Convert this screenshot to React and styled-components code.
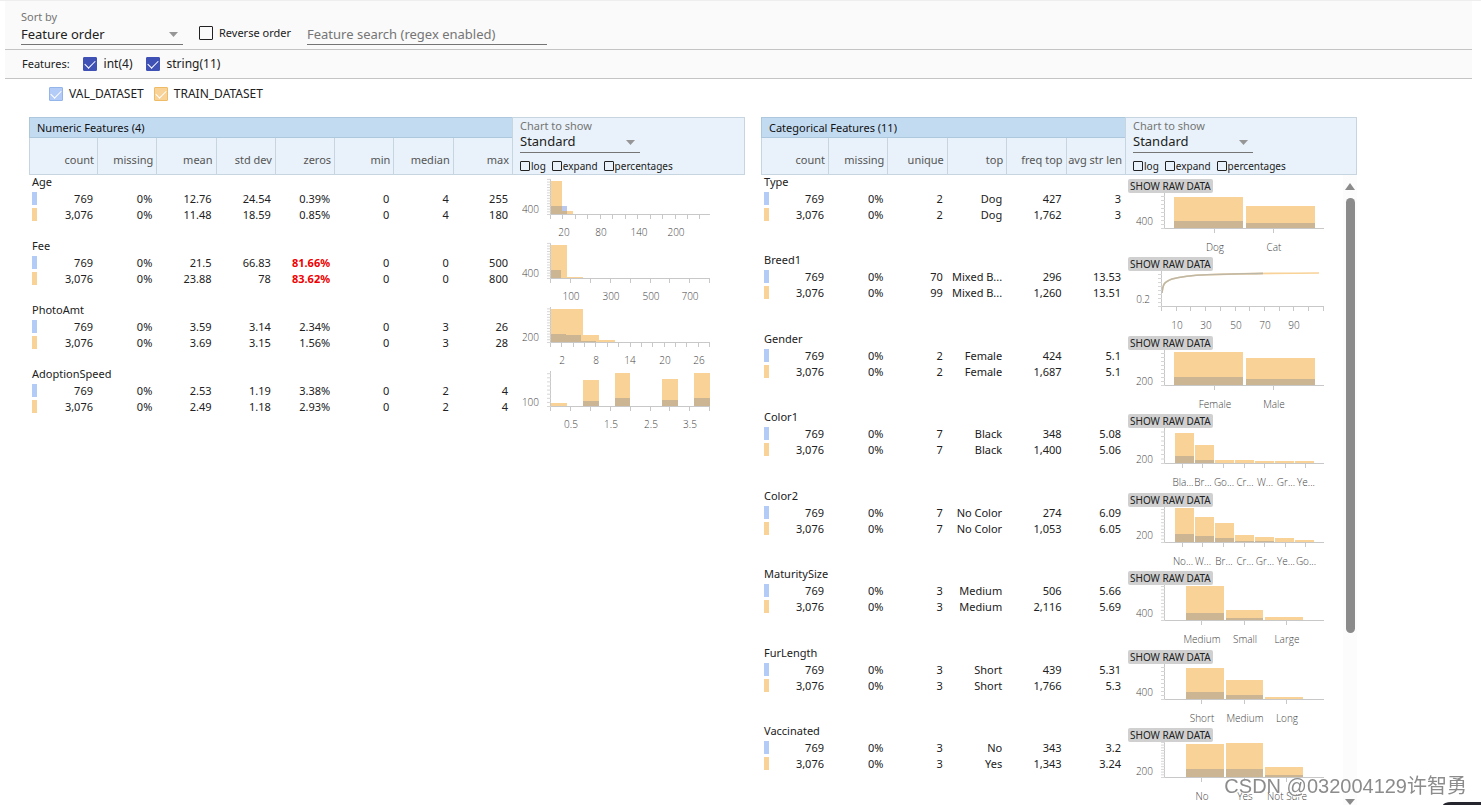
import React from "react";
import styled, { createGlobalStyle } from "styled-components";

const BLUE = "#b3cbf7";
const ORANGE = "#f8d297";
const BLUE_BAR = "#b9c8ee";
const BOTH_BAR = "#cbb592";

const GlobalStyle = createGlobalStyle`
  *, *::before, *::after { box-sizing: border-box; }
  body {
    margin: 0;
    background: #fff;
    color: #212121;
    font-family: "Noto Sans", "Open Sans", "Noto Sans CJK SC", sans-serif;
    font-size: 11px;
    line-height: 16px;
  }
  input, select, button { font: inherit; color: inherit; margin: 0; }
`;

const Page = styled.div`
  height: 100vh;
  display: flex;
  flex-direction: column;
  overflow: hidden;
  padding: 0 9px 0 5px;
  border-top: 1px solid #eee;
`;

const Toolbar = styled.header`
  display: flex;
  align-items: flex-start;
  gap: 16px;
  height: 49px;
  padding: 8px 16px 0;
  background: #fafafa;
  border-bottom: 1px solid #c4c4c4;
`;

const FeatureBar = styled.div`
  display: flex;
  align-items: center;
  gap: 13px;
  height: 29px;
  padding: 0 17px;
  background: #fafafa;
  border-bottom: 1px solid #c4c4c4;
`;

const Legend = styled.div`
  display: flex;
  align-items: center;
  gap: 10px;
  height: 30px;
  padding-left: 44px;
`;

const SelectField = styled.label`
  position: relative;
  display: flex;
  flex-direction: column;
  width: ${(p) => p.$width}px;
  color: #757575;
  line-height: ${(p) => (p.$compact ? 15 : 16)}px;
  text-align: left;
`;

const Select = styled.select`
  appearance: none;
  height: 20px;
  padding: 0 20px 2px 0;
  border: 0;
  border-bottom: 1px solid #757575;
  border-radius: 0;
  background: transparent;
  color: #212121;
  font-size: 13px;
  outline: 0;
`;

const Arrow = styled.svg`
  position: absolute;
  right: 5px;
  bottom: 8px;
`;

const CheckLabel = styled.label`
  display: inline-flex;
  align-items: center;
  gap: ${(p) => p.$gap ?? 6}px;
  padding-top: ${(p) => p.$top ?? 0}px;
  font-size: ${(p) => p.$font ?? 11}px;
`;

const CheckBox = styled.input.attrs({ type: "checkbox" })`
  appearance: none;
  display: grid;
  place-items: center;
  width: ${(p) => p.$size ?? 14}px;
  height: ${(p) => p.$size ?? 14}px;
  border: 1px solid ${(p) => p.$edge ?? "#212121"};
  border-radius: 1px;
  &:checked { background: ${(p) => p.$fill}; }
  &:checked::before {
    content: "";
    width: 10px;
    height: 6px;
    margin-bottom: 3px;
    border-left: 1px solid #fff;
    border-bottom: 1px solid #fff;
    transform: rotate(-45deg);
  }
`;

const Search = styled.input`
  width: 240px;
  height: 20px;
  margin-top: 16px;
  padding: 0 0 1px;
  border: 0;
  border-bottom: 1px solid #757575;
  background: transparent;
  font-size: 13px;
  outline: 0;
  &::placeholder { color: #757575; opacity: 1; }
`;

const Main = styled.main`
  flex: 1;
  min-height: 0;
  display: flex;
  align-items: stretch;
  gap: 16px;
  padding: 8px 0 0 24px;
`;

const Panel = styled.section`
  position: relative;
  width: ${(p) => p.$width}px;
  overflow: hidden;
`;

const Table = styled.table`
  width: 100%;
  table-layout: fixed;
  border-collapse: separate;
  border-spacing: 0;
`;

const TitleCell = styled.th`
  height: 21px;
  padding: 0 7px;
  background: #c3dbf1;
  border: 1px solid #adc8dd;
  border-right: 0;
  font-weight: 400;
  text-align: left;
  color: #111;
`;

const HeadCell = styled.th`
  height: 37px;
  padding: 7px 3px 0 0;
  background: #e9f2fa;
  border-left: 1px solid #c6d5e0;
  border-bottom: 1px solid #c6d5e0;
  font-weight: 400;
  text-align: right;
  white-space: nowrap;
  color: #555;
`;

const ControlCell = styled.th`
  height: 58px;
  padding: 0 0 0 7px;
  background: #e9f2fa;
  border: 1px solid #c6d5e0;
  font-weight: 400;
  vertical-align: top;
`;

const Options = styled.div`
  display: flex;
  gap: 6px;
  padding-top: 5px;
`;

const FeatureGroup = styled.tbody`
  &:nth-of-type(even) tr:last-child { height: ${(p) => (p.$tall ? 47 : 32)}px; }
`;

const NameRow = styled.tr`
  height: 16px;
`;

const ValueRow = styled.tr`
  height: ${(p) => p.$height}px;
`;

const NameCell = styled.th`
  padding: 0 3px;
  font-weight: 400;
  line-height: 14px;
  text-align: left;
  vertical-align: top;
`;

const Value = styled.td`
  padding: 0 4px 0 0;
  vertical-align: top;
  text-align: right;
  white-space: nowrap;
  color: ${(p) => (p.$alert ? "#f00000" : "inherit")};
  font-weight: ${(p) => (p.$alert ? 700 : 400)};
`;

const CountLine = styled.div`
  display: flex;
  justify-content: space-between;
  padding-left: 3px;
`;

const Swatch = styled.span`
  width: 5px;
  height: 13px;
  margin-top: 1px;
  background: ${(p) => p.$color};
`;

const ChartCell = styled.td`
  position: relative;
  padding: 0 0 0 1px;
  vertical-align: top;
`;

const RawButton = styled.button`
  position: absolute;
  top: 4px;
  left: 3px;
  height: 14px;
  padding: 0 2px;
  border: 0;
  border-radius: 2px;
  background: #d0d0d0;
  font-size: 10px;
  line-height: 14px;
  white-space: nowrap;
`;

const ChartSvg = styled.svg`
  display: block;
  overflow: visible;
  text {
    font-family: "Open Sans", sans-serif;
    font-size: 10px;
    font-weight: 300;
    fill: #444;
  }
`;

const Track = styled.div`
  position: absolute;
  top: 58px;
  right: 0;
  bottom: 0;
  width: 14px;
  display: flex;
  flex-direction: column;
  align-items: center;
  padding-top: 8px;
  background: #fcfcfc;
`;

const Thumb = styled.div`
  width: 9px;
  flex: 0 0 70%;
  margin: 8px 0 auto;
  border-radius: 5px;
  background: #8b8b8b;
`;

const Watermark = styled.div`
  position: fixed;
  right: 14px;
  bottom: 5px;
  font-family: "Liberation Sans", "Noto Sans CJK SC", sans-serif;
  font-size: 20px;
  line-height: 28px;
  color: #8c8c8c;
  text-shadow: 1px 1px 0 #fff;
  white-space: nowrap;
`;

const Corner = styled.div`
  position: fixed;
  right: 0;
  bottom: 0;
  width: 38px;
  height: 3px;
  border-top-left-radius: 8px 3px;
  background: #25252d;
`;

const range = (start, step, end) => {
  const out = [];
  for (let v = start; v <= end + 0.1; v += step) out.push(v);
  return out;
};

/* Each bar is [x, right, top]; "train" is drawn in orange, "val" over it. */
function Chart({ spec, wide, label }) {
  const base = wide ? 54 : 40;
  const top = wide ? 18 : 4;
  const axis = spec.axis ?? (wide ? 39 : 38);
  const end = wide ? 198 : 197;
  const text = wide ? 76 : 61;
  return (
    <ChartSvg width="222" height={wide ? 78 : 64} role="img" aria-label={label}>
      {spec.train.map(([x, r, y], i) => (
        <rect key={i} x={x} y={y} width={r - x} height={base - y} fill={ORANGE} />
      ))}
      {spec.val.map(([x, r, y, alone], i) => (
        <rect key={i} x={x} y={y} width={r - x} height={base - y} fill={alone ? BLUE_BAR : BOTH_BAR} />
      ))}
      {spec.curves}
      <g stroke="#c8c8c8" fill="none">
        <path d={`M${axis - 0.5} ${top}V${base - 0.5}H${end}`} />
        {range(0, spec.yStep, base - top).map((v) => (
          <path key={v} d={`M${axis - 4} ${base - 0.5 - v}h4`} stroke="#d6d6d6" />
        ))}
        {spec.ticks.map((x) => (
          <path key={x} d={`M${Math.round(x) - 0.5} ${base}v4`} />
        ))}
      </g>
      <text x={spec.yRight ?? (wide ? 27 : 26)} y={spec.yAt + 4} textAnchor="end">{spec.yLabel}</text>
      {spec.labels.map(([x, t]) => (
        <text key={t + x} x={x} y={text} textAnchor="middle">{t}</text>
      ))}
    </ChartSvg>
  );
}

const numeric = [
  {
    name: "Age",
    rows: [
      ["769", "0%", "12.76", "24.54", "0.39%", "0", "4", "255"],
      ["3,076", "0%", "11.48", "18.59", "0.85%", "0", "4", "180"],
    ],
    chart: {
      train: [[38, 49, 6], [54, 60, 36], [60, 83, 39]],
      val: [[38, 49, 31], [49, 54, 31, true], [49, 54, 36]],
      ticks: range(38, 12.45, 190), yStep: 2.7, yAt: 34, yLabel: "400",
      labels: [[51, "20"], [88, "80"], [126, "140"], [163, "200"]],
    },
  },
  {
    name: "Fee",
    rows: [
      ["769", "0%", "21.5", "66.83", "!81.66%", "0", "0", "500"],
      ["3,076", "0%", "23.88", "78", "!83.62%", "0", "0", "800"],
    ],
    chart: {
      train: [[38, 54, 6], [54, 70, 38], [70, 100, 39]],
      val: [[38, 48, 31]],
      ticks: range(38, 19.9, 198), yStep: 2.7, yAt: 34, yLabel: "400",
      labels: [[58, "100"], [98, "300"], [138, "500"], [177, "700"]],
    },
  },
  {
    name: "PhotoAmt",
    rows: [
      ["769", "0%", "3.59", "3.14", "2.34%", "0", "3", "26"],
      ["3,076", "0%", "3.69", "3.15", "1.56%", "0", "3", "28"],
    ],
    chart: {
      train: [[38, 70, 6], [70, 86, 32], [86, 102, 37], [102, 117, 39]],
      val: [[38, 53, 31], [53, 68, 32], [68, 83, 38], [83, 107, 39]],
      ticks: range(38, 11.36, 198), yStep: 2.8, yAt: 34, yLabel: "200",
      labels: [[49, "2"], [83, "8"], [117, "14"], [152, "20"], [186, "26"]],
    },
  },
  {
    name: "AdoptionSpeed",
    rows: [
      ["769", "0%", "2.53", "1.19", "3.38%", "0", "2", "4"],
      ["3,076", "0%", "2.49", "1.18", "2.93%", "0", "2", "4"],
    ],
    chart: {
      train: [[38, 54, 36], [70, 86, 13], [102, 117, 6], [149, 165, 12], [181, 197, 6]],
      val: [[38, 54, 39], [70, 86, 34], [102, 117, 31], [149, 165, 33], [181, 197, 31]],
      ticks: range(38, 19.9, 198), yStep: 4.1, yAt: 35, yLabel: "100",
      labels: [[58, "0.5"], [98, "1.5"], [138, "2.5"], [177, "3.5"]],
    },
  },
];

const bars = (edges, tops) => tops.map((y, i) => [edges[i][0], edges[i][1], y]);
const two = [[48, 117], [120, 189]];
const three = [[60, 98], [100, 137], [139, 177]];
const seven = [[49, 68], [69, 88], [89, 108], [109, 128], [129, 148], [149, 168], [169, 188]];
const twoTicks = [89, 148];
const threeTicks = [76, 119, 161];
const sevenTicks = [57, 77, 98, 119, 139, 160, 180];
const named = (ticks, names) => ticks.map((x, i) => [x, names[i]]);

const categorical = [
  {
    name: "Type",
    rows: [
      ["769", "0%", "2", "Dog", "427", "3"],
      ["3,076", "0%", "2", "Dog", "1,762", "3"],
    ],
    chart: {
      train: bars(two, [22, 31]), val: bars(two, [46, 48]), ticks: twoTicks,
      yStep: 4, yAt: 46, yLabel: "400", labels: named(twoTicks, ["Dog", "Cat"]),
    },
  },
  {
    name: "Breed1",
    rows: [
      ["769", "0%", "70", "Mixed B...", "296", "13.53"],
      ["3,076", "0%", "99", "Mixed B...", "1,260", "13.51"],
    ],
    chart: {
      axis: 36, train: [], val: [], ticks: range(36, 14.7, 198),
      yStep: 4, yAt: 46, yRight: 24, yLabel: "0.2",
      labels: [[51, "10"], [80, "30"], [110, "50"], [139, "70"], [168, "90"]],
      curves: (
        <g fill="none" strokeWidth="1.6">
          <path d="M36 40C37 31 38 29 46 26C56 23 70 22 81 21.7C110 20.8 150 20.2 193 20" stroke={ORANGE} />
          <path d="M36 40C37 31 38 29 46 26C56 23 70 22 81 21.7C100 21 120 20.8 137 20.4" stroke="#bdb7a8" />
        </g>
      ),
    },
  },
  {
    name: "Gender",
    rows: [
      ["769", "0%", "2", "Female", "424", "5.1"],
      ["3,076", "0%", "2", "Female", "1,687", "5.1"],
    ],
    chart: {
      train: bars(two, [20, 26]), val: bars(two, [45, 47]), ticks: twoTicks,
      yStep: 4, yAt: 49, yLabel: "200", labels: named(twoTicks, ["Female", "Male"]),
    },
  },
  {
    name: "Color1",
    rows: [
      ["769", "0%", "7", "Black", "348", "5.08"],
      ["3,076", "0%", "7", "Black", "1,400", "5.06"],
    ],
    chart: {
      train: bars(seven, [23, 35, 50, 50, 51, 51, 51]),
      val: bars(seven, [46, 50, 53, 53, 53, 53, 53]), ticks: sevenTicks,
      yStep: 4.5, yAt: 49, yLabel: "200",
      labels: named(sevenTicks, ["Bla...", "Br...", "Go...", "Cr...", "W...", "Gr...", "Ye..."]),
    },
  },
  {
    name: "Color2",
    rows: [
      ["769", "0%", "7", "No Color", "274", "6.09"],
      ["3,076", "0%", "7", "No Color", "1,053", "6.05"],
    ],
    chart: {
      train: bars(seven, [19, 28, 34, 46, 48, 49, 51]),
      val: bars(seven, [45, 47, 49, 52, 52, 53, 53]), ticks: sevenTicks,
      yStep: 3.3, yAt: 46, yLabel: "200",
      labels: named(sevenTicks, ["No...", "W...", "Br...", "Cr...", "Gr...", "Ye...", "Go..."]),
    },
  },
  {
    name: "MaturitySize",
    rows: [
      ["769", "0%", "3", "Medium", "506", "5.66"],
      ["3,076", "0%", "3", "Medium", "2,116", "5.69"],
    ],
    chart: {
      train: bars(three, [19, 43, 50]), val: bars(three, [46, 51, 53]), ticks: threeTicks,
      yStep: 3.4, yAt: 46, yLabel: "400", labels: named(threeTicks, ["Medium", "Small", "Large"]),
    },
  },
  {
    name: "FurLength",
    rows: [
      ["769", "0%", "3", "Short", "439", "5.31"],
      ["3,076", "0%", "3", "Short", "1,766", "5.3"],
    ],
    chart: {
      train: bars(three, [22, 34, 51]), val: bars(three, [46, 49, 53]), ticks: threeTicks,
      yStep: 4, yAt: 46, yLabel: "400", labels: named(threeTicks, ["Short", "Medium", "Long"]),
    },
  },
  {
    name: "Vaccinated",
    rows: [
      ["769", "0%", "3", "No", "343", "3.2"],
      ["3,076", "0%", "3", "Yes", "1,343", "3.24"],
    ],
    chart: {
      train: bars(three, [20, 19, 43]), val: bars(three, [45, 45, 51]), ticks: threeTicks,
      yStep: 2.7, yAt: 47, yLabel: "200", labels: named(threeTicks, ["No", "Yes", "Not Sure"]),
    },
  },
  { name: "Sterilized", rows: [] },
];

function Drop({ label, value, width, compact }) {
  return (
    <SelectField $width={width} $compact={compact}>
      {label}
      <Select defaultValue={value}>
        <option>{value}</option>
      </Select>
      <Arrow width="9" height="5" viewBox="0 0 9 5" aria-hidden="true">
        <path d="M0 0h9L4.500 5z" fill="#969696" />
      </Arrow>
    </SelectField>
  );
}

function Feature({ feature, cols, wide }) {
  return (
    <FeatureGroup $tall={wide}>
      <NameRow>
        <NameCell colSpan={cols} scope="rowgroup">{feature.name}</NameCell>
        {feature.chart && (
          <ChartCell rowSpan={3}>
            <Chart spec={feature.chart} wide={wide} label={`${feature.name} distribution`} />
            {wide && <RawButton type="button">SHOW RAW DATA</RawButton>}
          </ChartCell>
        )}
      </NameRow>
      {feature.rows.map((row, r) => (
        <ValueRow key={r} $height={r === 0 ? 16 : wide ? 46 : 32}>
          {row.map((v, c) =>
            c === 0 ? (
              <Value key={c}>
                <CountLine>
                  <Swatch $color={r === 0 ? BLUE : ORANGE} />
                  {v}
                </CountLine>
              </Value>
            ) : (
              <Value key={c} $alert={v[0] === "!"}>{v.replace("!", "")}</Value>
            )
          )}
        </ValueRow>
      ))}
    </FeatureGroup>
  );
}

function FeaturePanel({ title, heads, features, width, first, chartWidth, wide, children }) {
  return (
    <Panel $width={width} aria-label={title}>
      <Table>
        <colgroup>
          <col width={first} />
          {heads.slice(1).map((h) => <col key={h} />)}
          <col width={chartWidth} />
        </colgroup>
        <thead>
          <tr>
            <TitleCell colSpan={heads.length}>{title}</TitleCell>
            <ControlCell rowSpan={2}>
              <Drop label="Chart to show" value="Standard" width={120} compact />
              <Options>
                {["log", "expand", "percentages"].map((o) => (
                  <CheckLabel key={o} $gap={1} $font={10}>
                    <CheckBox $size={10} $fill="#3f51b5" />
                    {o}
                  </CheckLabel>
                ))}
              </Options>
            </ControlCell>
          </tr>
          <tr>
            {heads.map((h) => <HeadCell key={h} scope="col">{h}</HeadCell>)}
          </tr>
        </thead>
        {features.map((f) => (
          <Feature key={f.name} feature={f} cols={heads.length} wide={wide} />
        ))}
      </Table>
      {children}
    </Panel>
  );
}

export default function App() {
  return (
    <>
      <GlobalStyle />
      <Page>
        <Toolbar>
          <Drop label="Sort by" value="Feature order" width={162} />
          <CheckLabel $top={16}>
            <CheckBox $fill="#3f51b5" />
            Reverse order
          </CheckLabel>
          <Search placeholder="Feature search (regex enabled)" aria-label="Feature search" />
        </Toolbar>
        <FeatureBar>
          <span>Features:</span>
          <CheckLabel $gap={7} $font={12}>
            <CheckBox $fill="#3f51b5" $edge="#3f51b5" defaultChecked />int(4)
          </CheckLabel>
          <CheckLabel $gap={7} $font={12}>
            <CheckBox $fill="#3f51b5" $edge="#3f51b5" defaultChecked />string(11)
          </CheckLabel>
        </FeatureBar>
        <Legend>
          <CheckLabel $font={12}>
            <CheckBox $fill={BLUE} $edge="#93b5ea" defaultChecked />VAL_DATASET
          </CheckLabel>
          <CheckLabel $font={12}>
            <CheckBox $fill={ORANGE} $edge="#eebb66" defaultChecked />TRAIN_DATASET
          </CheckLabel>
        </Legend>
        <Main>
          <FeaturePanel
            title="Numeric Features (4)"
            heads={["count", "missing", "mean", "std dev", "zeros", "min", "median", "max"]}
            features={numeric}
            width={716}
            first={68}
            chartWidth={233}
          />
          <FeaturePanel
            title="Categorical Features (11)"
            heads={["count", "missing", "unique", "top", "freq top", "avg str len"]}
            features={categorical}
            width={596}
            first={67}
            chartWidth={232}
            wide
          >
            <Track aria-hidden="true">
              <svg width="10" height="7" viewBox="0 0 10 7"><path d="M0 7L5 0l5 7z" fill="#8b8b8b" /></svg>
              <Thumb />
              <svg width="10" height="6" viewBox="0 0 10 6"><path d="M0 0h10L5 6z" fill="#8b8b8b" /></svg>
            </Track>
          </FeaturePanel>
        </Main>
      </Page>
      <Watermark>CSDN @032004129许智勇</Watermark>
      <Corner />
    </>
  );
}
